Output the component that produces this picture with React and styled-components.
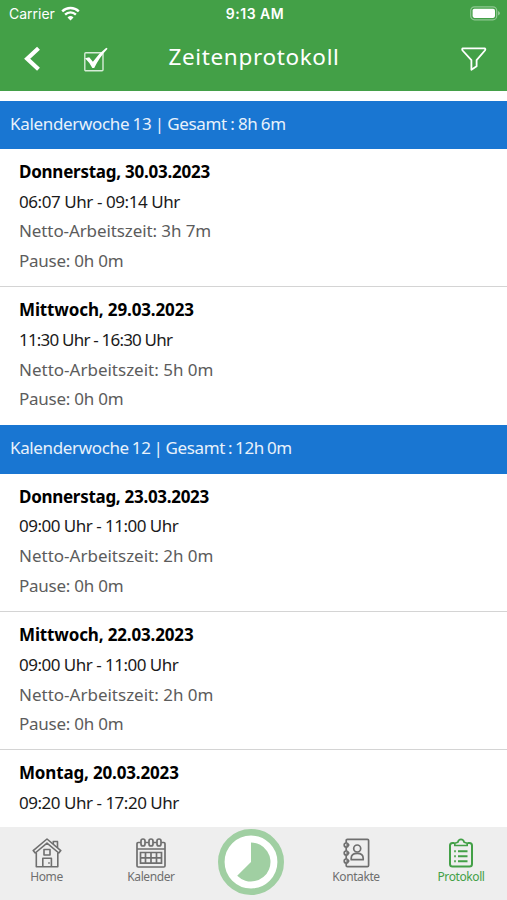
import React from 'react';
import styled, { createGlobalStyle } from 'styled-components';

const colors = {
    green: '#43a047',
    lightGreen: '#a0cfa2',
    blue: '#1976d2',
    grey: '#6f6f6f',
    bar: '#eeeeee'
};

// tight: [letter-spacing, word-spacing] in px
const weeks = [
    {
        label: 'Kalenderwoche 13 | Gesamt : 8h 6m',
        tight: [-0.33, -0.7],
        days: [
            {
                date: 'Donnerstag, 30.03.2023', dateTight: [-0.25, 0],
                time: '06:07 Uhr - 09:14 Uhr', timeTight: [-0.43, 0],
                netto: '3h 7m', nettoTight: [-0.1, 0], pause: '0h 0m'
            },
            {
                date: 'Mittwoch, 29.03.2023', dateTight: [-0.13, 0],
                time: '11:30 Uhr - 16:30 Uhr', timeTight: [-0.8, 0],
                netto: '5h 0m', pause: '0h 0m'
            }
        ]
    },
    {
        label: 'Kalenderwoche 12 | Gesamt : 12h 0m',
        tight: [-0.36, -1.1],
        days: [
            {
                date: 'Donnerstag, 23.03.2023', dateTight: [-0.29, 0],
                time: '09:00 Uhr - 11:00 Uhr', timeTight: [-0.51, 0],
                netto: '2h 0m', pause: '0h 0m'
            },
            {
                date: 'Mittwoch, 22.03.2023', dateTight: [-0.15, 0],
                time: '09:00 Uhr - 11:00 Uhr', timeTight: [-0.51, 0],
                netto: '2h 0m', pause: '0h 0m'
            },
            {
                date: 'Montag, 20.03.2023', dateTight: [-0.16, 0],
                time: '09:20 Uhr - 17:20 Uhr', timeTight: [-0.48, 0]
            }
        ]
    }
];

const WifiIcon = () => (
    <svg width='19' height='15' viewBox='0 0 19 15' fill='none' stroke='#fff' strokeWidth='2.4'>
        <path d='M1.2 5.3a11.9 11.9 0 0 1 16.6 0' />
        <path d='M4.1 8.6a7.7 7.7 0 0 1 10.8 0' />
        <path d='M9.5 14.6l-3-3.2a4.3 4.3 0 0 1 6 0z' fill='#fff' stroke='none' />
    </svg>
);

const BatteryIcon = () => (
    <svg width='31' height='15' viewBox='0 0 31 15'>
        <rect x='0.7' y='0.8' width='26' height='13' rx='3.8' fill='none' stroke='#8fc792' strokeWidth='1.2' />
        <rect x='2.6' y='2.7' width='22.4' height='9.2' rx='1.8' fill='#fff' />
        <path d='M28 5v4.6q2-.8 2-2.3T28 5z' fill='#8fc792' />
    </svg>
);

const BackIcon = () => (
    <svg width='18' height='26' viewBox='0 0 18 26' fill='none' stroke='#fff' strokeWidth='4.2'>
        <path d='M15.5 2.2L4.2 12.8l11.3 10.4' />
    </svg>
);

const CheckIcon = () => (
    <svg width='26' height='26' viewBox='0 0 26 26'>
        <rect x='1.8' y='6.7' width='18.2' height='18' rx='1' fill='none' stroke='#d6ecd7' strokeWidth='1.4' />
        <path d='M2 12.3l4.2-1 3.7 4.4Q15.500 7.500 23.300 1.700l1.300 1Q16.500 11 11.200 22.100H9.300Q6.500 16.300 2 12.300z' fill='#fff' />
    </svg>
);

const FilterIcon = () => (
    <svg width='26' height='24' viewBox='0 0 26 24' fill='none' stroke='#fff' strokeWidth='1.8' strokeLinejoin='round'>
        <path d='M1.6 1.3h22.3q.9.9 0 2.2L15.6 13.2v6l-5.2 3.5v-9.5L1.6 3.5q-.8-1.3 0-2.2z' />
    </svg>
);

const HomeIcon = () => (
    <svg width='30' height='30' viewBox='0 0 30 30' fill='none' stroke='currentColor' strokeWidth='1.6' strokeLinejoin='round'>
        <path d='M15 1L1.2 12.6l2 2.4L15 5.2 26.8 15l2-2.4z' />
        <path d='M4.3 14.5v14.3h21.500V14.500' />
        <path d='M21.3 6V3.500h4.200v6.200M20.700 3.500h5.400' />
        <path d='M12 11.5h6v5.500h-6zM10.800 29v-8.800h8.600V29' />
        <path d='M17 24.2v1.6' />
    </svg>
);

const CalendarIcon = () => (
    <svg width='30' height='30' viewBox='0 0 30 30' fill='none' stroke='currentColor' strokeWidth='1.7'>
        <path d='M4.8 4.5H2.2Q1 4.5 1 5.7v22.1Q1 29 2.2 29h25.6q1.2 0 1.2-1.2V5.7q0-1.2-1.2-1.2h-2.6M9.2 4.5h3.6M17.2 4.5h3.6M1 11h28' />
        <rect x='5' y='1' width='4' height='7' rx='2' />
        <rect x='13' y='1' width='4' height='7' rx='2' />
        <rect x='21' y='1' width='4' height='7' rx='2' />
        <path d='M4.5 14.5h21v10.6h-21zM4.5 19.8h21M9.5 14.500v10.600M15 14.500v10.600M20.500 14.500v10.600' />
    </svg>
);

const TimerIcon = () => (
    <svg width='66' height='66' viewBox='0 0 66 66'>
        <circle cx='33' cy='33' r='29.7' fill='#fff' stroke={colors.lightGreen} strokeWidth='6.6' />
        <path d='M33 33V13.5A19.5 19.5 0 1 1 19.2 46.8z' fill={colors.lightGreen} />
    </svg>
);

const ContactsIcon = () => (
    <svg width='28' height='30' viewBox='0 0 28 30' fill='none' stroke='currentColor' strokeWidth='1.7'>
        <path d='M4.2 5V2.6q0-1.2 1.2-1.2h20q1.2 0 1.2 1.2v24.8q0 1.2-1.2 1.2h-20q-1.2 0-1.2-1.2V25M4.2 9v4M4.2 17v4' />
        <circle cx='4.2' cy='7' r='2' />
        <circle cx='4.2' cy='15' r='2' />
        <circle cx='4.2' cy='23' r='2' />
        <path d='M4.200 7h3.300M4.200 15h3.300M4.200 23h3.300' />
        <circle cx='15.2' cy='10.5' r='3.5' />
        <path d='M9.2 21.7v-1.5q0-4.800 6-4.800t6 4.800v1.500z' strokeLinejoin='round' />
    </svg>
);

const ProtocolIcon = () => (
    <svg width='26' height='30' viewBox='0 0 26 30' fill='none' stroke='currentColor' strokeWidth='2' strokeLinejoin='round'>
        <path d='M6.5 5H4.5Q2 5 2 7.5v18.5q0 2.5 2.5 2.5h17q2.5 0 2.5-2.5V7.5Q24 5 21.5 5h-2' />
        <path d='M6.8 7.5V5.2l3-.9Q10.5 1.3 13 1.3t3.2 3l3 .9v2.3z' strokeWidth='1.7' />
        <path d='M6.2 13.3h1.6M10 13.3h9.5M6.2 18.3h1.6M10 18.3h9.5M6.2 23.3h1.6M10 23.3h9.5' />
    </svg>
);

const tabs = [
    { name: 'Home', icon: <HomeIcon />, width: 93 },
    { name: 'Kalender', icon: <CalendarIcon />, width: 116 },
    { name: 'Kontakte', icon: <ContactsIcon />, width: 118 },
    { name: 'Protokoll', icon: <ProtocolIcon />, width: 92, active: true }
];

const Tab = ({ tab }) => (
    <TabItem $width={tab.width} $active={tab.active}>
        {tab.icon}
        <span>{tab.name}</span>
    </TabItem>
);

export default class App extends React.Component {
    render() {
        return (
            <Screen>
                <GlobalStyle />
                <Header>
                    <StatusBar>
                        <div className='carrier'>Carrier <WifiIcon /></div>
                        <div className='clock'>9:13 AM</div>
                        <div className='battery'><BatteryIcon /></div>
                    </StatusBar>
                    <TitleBar>
                        <div className='actions'>
                            <BackIcon />
                            <CheckIcon />
                        </div>
                        <h1>Zeitenprotokoll</h1>
                        <div className='filter'><FilterIcon /></div>
                    </TitleBar>
                </Header>
                <List>
                    {weeks.map(week => (
                        <section key={week.label}>
                            <WeekHeader $tight={week.tight}>{week.label}</WeekHeader>
                            {week.days.map(day => (
                                <Day key={day.date}>
                                    <DayDate $tight={day.dateTight}>{day.date}</DayDate>
                                    <Line $tight={day.timeTight}>{day.time}</Line>
                                    {day.netto ? <Line $muted $tight={day.nettoTight}>Netto-Arbeitszeit: {day.netto}</Line> : null}
                                    {day.pause ? <Line $muted $tight={[-0.25, 0]}>Pause: {day.pause}</Line> : null}
                                </Day>
                            ))}
                        </section>
                    ))}
                </List>
                <TabBar>
                    <Tab tab={tabs[0]} />
                    <Tab tab={tabs[1]} />
                    <TimerButton><TimerIcon /></TimerButton>
                    <Tab tab={tabs[2]} />
                    <Tab tab={tabs[3]} />
                </TabBar>
            </Screen>
        );
    }
}

const GlobalStyle = createGlobalStyle`
    body {
        margin: 0;
        background: white;
        font-family: 'Noto Sans', sans-serif;
    }
    svg {
        display: block;
        flex: none;
    }
`

const Screen = styled.div`
    height: 900px;
    display: flex;
    flex-direction: column;
    overflow: hidden;
`

const Header = styled.header`
    flex: none;
    height: 91px;
    background: ${colors.green};
    color: white;
`

const StatusBar = styled.div`
    display: grid;
    grid-template-columns: 1fr auto 1fr;
    align-items: center;
    height: 27px;
    padding: 0 6px 0 9px;
    font-family: Inter, sans-serif;
    font-size: 14px;

    .carrier {
        display: flex;
        align-items: center;
        gap: 6px;
    }
    .clock {
        font-weight: 600;
        letter-spacing: 0.5px;
    }
    .battery {
        justify-self: end;
    }
`

const TitleBar = styled.div`
    display: grid;
    grid-template-columns: 1fr auto 1fr;
    align-items: center;
    height: 64px;
    padding: 0 20px 0 23px;

    .actions {
        display: flex;
        align-items: center;
        gap: 42px;
    }
    h1 {
        margin: 0 2px 6px 0;
        font-size: 22.5px;
        font-weight: 400;
        letter-spacing: 0.65px;
    }
    .filter {
        justify-self: end;
    }
`

const List = styled.main`
    flex: 1;
    min-height: 0;
    overflow: hidden;
    padding-top: 9.5px;
`

const WeekHeader = styled.h2`
    box-sizing: border-box;
    height: 48.3px;
    margin: 0;
    padding-left: 10px;
    background: ${colors.blue};
    color: #e8f1fb;
    font-size: 17px;
    font-weight: 400;
    line-height: 46px;
    letter-spacing: ${props => props.$tight ? props.$tight[0] : 0}px;
    word-spacing: ${props => props.$tight ? props.$tight[1] : 0}px;
    white-space: nowrap;
`

const Day = styled.article`
    box-sizing: border-box;
    height: 138.3px;
    padding: 8px 0 0 19px;
    border-bottom: 1px solid #d4d4d4;

    &:last-child {
        border-bottom: none;
    }
`

const DayDate = styled.h3`
    margin: 0;
    color: black;
    font-size: 17px;
    font-weight: 700;
    line-height: 29.8px;
    letter-spacing: ${props => props.$tight ? props.$tight[0] : 0}px;
`

const Line = styled.p`
    margin: 0;
    color: ${props => props.$muted ? '#5c5c5c' : '#1a1a1a'};
    font-size: 17px;
    line-height: 29.8px;
    letter-spacing: ${props => props.$tight ? props.$tight[0] : 0}px;
    word-spacing: ${props => props.$tight ? props.$tight[1] : 0}px;
`

const TabBar = styled.nav`
    flex: none;
    display: flex;
    height: 73px;
    background: ${colors.bar};
`

const TabItem = styled.div`
    width: ${props => props.$width}px;
    padding-top: 11px;
    display: flex;
    flex-direction: column;
    align-items: center;
    color: ${props => props.$active ? colors.green : colors.grey};

    span {
        font-size: 12px;
        line-height: 17px;
        letter-spacing: -0.4px;
    }
`

const TimerButton = styled.div`
    width: 88px;
    padding-top: 2px;
    display: flex;
    justify-content: center;

    svg {
        margin-right: 4px;
    }
`
